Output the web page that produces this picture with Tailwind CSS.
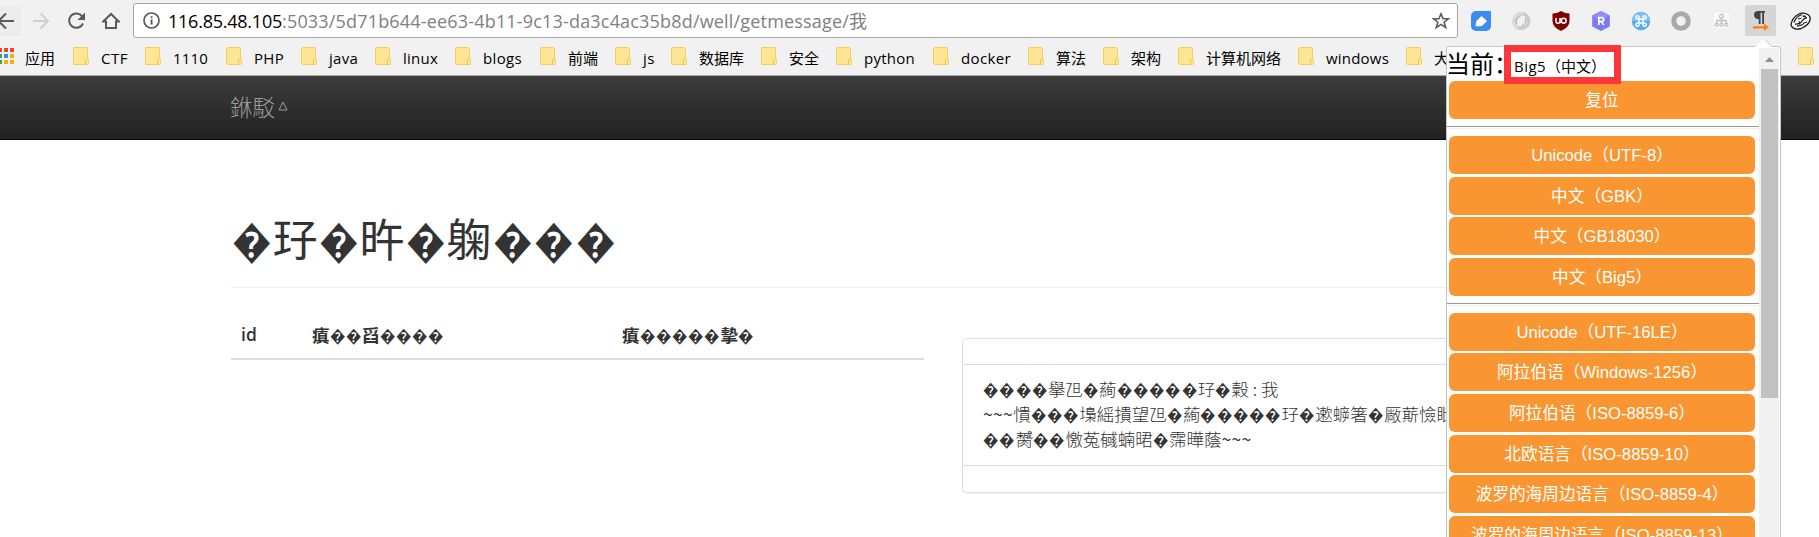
<!DOCTYPE html>
<html lang="zh-CN">
<head>
<meta charset="utf-8">
<title>well/getmessage</title>
<script src="https://cdn.jsdelivr.net/npm/@tailwindcss/browser@4"></script>
</head>
<body class="relative h-[537px] w-[1819px] overflow-hidden bg-white font-['Open_Sans','Noto_Sans_CJK_SC',sans-serif] text-[#333]">

<!-- browser toolbar -->
<div class="flex h-[39px] items-center bg-[#f1f1f1] pt-[2px]">
  <div class="flex h-[30px] w-[21px] items-center bg-[#ececec]">
    <svg class="h-5 w-[21px]" viewBox="0 0 21 20" fill="none" stroke="#5a5a5a" stroke-width="2"><path d="M14 10H-1M6 2.500L-1.500 10 6 17.500"/></svg>
  </div>
  <svg class="ml-[11px] h-5 w-[18px]" viewBox="0 0 18 20" fill="none" stroke="#cfcfcf" stroke-width="2"><path d="M1 10H16M8.500 2.500L16 10l-7.500 7.500"/></svg>
  <svg class="ml-[17px] h-[18px] w-[19px]" viewBox="0 0 19 18" fill="none" stroke="#5a5a5a" stroke-width="2"><path d="M15.300 4.500A7.200 7.200 0 1 0 16 11.500"/><path d="M18 0.500V8H10.500z" fill="#5a5a5a" stroke="none"/></svg>
  <svg class="ml-[16px] h-[18px] w-[18px]" viewBox="0 0 18 18" fill="none" stroke="#5a5a5a" stroke-width="2"><path d="M1.200 9.500L9 2l7.800 7.500H14V16H4V9.500z"/></svg>
  <div class="ml-[13px] flex h-[35px] w-[1325px] items-center rounded-[3px] border border-[#a6a6a6] bg-white pr-[7px] pl-[9px]">
    <svg class="size-[17px] shrink-0" viewBox="0 0 17 17"><circle cx="8.500" cy="8.500" r="7.500" fill="none" stroke="#5a5a5a" stroke-width="1.700"/><path d="M7.600 7.500h1.900V12.500h-1.900zM7.600 4.300h1.900v1.900h-1.900z" fill="#5a5a5a"/></svg>
    <div class="ml-[8px] text-[18px] leading-[30px] tracking-[-0.300px] whitespace-nowrap"><span data-w="114" class="text-black">116.85.48.105</span><span data-w="567" class="text-[#808080]">:5033/5d71b644-ee63-4b11-9c13-da3c4ac35b8d/well/getmessage/</span><span class="text-[18px] text-[#808080]">我</span></div>
    <svg class="ml-auto size-[18px] shrink-0" viewBox="0 0 18 18" fill="none" stroke="#5a5a5a" stroke-width="1.600"><path d="M9 1.800l2.100 5h5.200l-4.200 3.400 1.600 5.400L9 12.400l-4.700 3.200 1.600-5.400L1.700 6.800h5.200z"/></svg>
  </div>
  <!-- extension icons -->
  <div class="ml-[13px] flex items-center">
    <div class="w-[40px]"><svg class="size-[20px]" viewBox="0 0 20 20"><path d="M5 0H20V15a5 5 0 0 1-5 5H5a5 5 0 0 1-5-5V5a5 5 0 0 1 5-5z" fill="#3b8cf0"/><path d="M5 15l.8-5L10.500 5.500 15.500 10l-4.500 4.500z" fill="#fff" stroke="#fff" stroke-linejoin="round"/></svg></div>
    <div class="w-[40px]"><svg class="size-[20px]" viewBox="0 0 20 20" fill="none"><path d="M12.500 3A7.300 7.300 0 1 0 8.500 17.500" stroke="#dadada" stroke-width="4"/><path d="M7.500 16.600A7.300 7.300 0 1 0 12 2.800" stroke="#cbcbcb" stroke-width="3.500"/><path d="M6 13Q3.500 7.500 10 4.500M14.500 7Q16 13 10 15.500" stroke="#b2b2b2" stroke-width="1.200"/></svg></div>
    <div class="w-[40px]"><svg class="size-[20px]" viewBox="0 0 20 20"><path d="M10 0q4 2.500 8.500 2.500V10q0 6-8.500 10Q1.500 16 1.500 10V2.500Q6 2.500 10 0z" fill="#800000"/><path d="M5 7v3.300q0 2 2 2t2-2V7M9.200 7v5.200" fill="none" stroke="#fff" stroke-width="1.500"/><circle cx="12.700" cy="9.700" r="2.400" fill="none" stroke="#fff" stroke-width="1.500"/></svg></div>
    <div class="w-[40px]"><svg class="size-[20px]" viewBox="0 0 20 20"><path d="M10 0l8.800 4.500v11L10 20l-8.800-4.500v-11z" fill="#7a7af2"/><path d="M10 0l8.800 4.500L10 10 1.200 4.500z" fill="#8f8ff8"/><path d="M7.800 14V6.500h2.700q2.200 0 2.200 2.100t-2.200 2.100H8M10.300 10.700L13 14" fill="none" stroke="#fff" stroke-width="1.700"/></svg></div>
    <div class="w-[40px]"><svg class="size-[20px]" viewBox="0 0 20 20"><circle cx="10" cy="10" r="9.200" fill="#5aacec"/><path d="M1 10a9 9 0 0 1 18 0z" fill="#7cc2f5"/><path d="M8 8H12V12H8zM8 8H6.500A1.600 1.600 0 1 1 8 6.500zM12 8V6.500A1.600 1.600 0 1 1 13.500 8zM12 12h1.500A1.600 1.600 0 1 1 12 13.500zM8 12v1.500A1.600 1.600 0 1 1 6.500 12z" fill="none" stroke="#fff" stroke-width="1.400"/></svg></div>
    <div class="w-[43px]"><svg class="size-[20px]" viewBox="0 0 20 20"><circle cx="10" cy="10" r="7.300" fill="none" stroke="#a9a9a9" stroke-width="5"/></svg></div>
    <div class="w-[31px]"><svg class="size-[15px]" viewBox="0 0 15 15" fill="none" stroke="#c0c0c0" stroke-width="1.300"><rect width="15" height="15" rx="2" fill="#fafafa" stroke="none"/><circle cx="7.500" cy="3.200" r="1.900"/><path d="M7.500 5v5M2.800 10V7.500h9.400V10"/><circle cx="2.800" cy="11.700" r="1.500"/><circle cx="7.500" cy="11.700" r="1.500"/><circle cx="12.200" cy="11.700" r="1.500"/></svg></div>
    <div class="flex h-[31px] w-[31px] items-center justify-center rounded-[2px] bg-[#d5d5d5]"><svg class="h-[20px] w-[18px]" viewBox="0 0 18 20"><path d="M5.500 0H13V1.800H12V13H10.200V1.800H8.500V13H6.700V8A4 4 0 0 1 5.500 0z" fill="#37474f"/><path d="M1 15.200H12V12.400L17 16.200 12 20V17.400H1z" fill="#ff7d0a"/></svg></div>
    <svg class="ml-[14px] h-[18px] w-[21px]" viewBox="0 0 21 18" fill="none" stroke="#1f1f1f" stroke-width="1.300"><path d="M1 13Q2 6 8 2.500 12 0 17 2q4 2 3 6-1 5-9 8.500-8 2-10-3.500z" fill="#fff"/><path d="M4 10.500q2-6 8-8M5 12q5 .5 7-3 2-3 5-3.500M8 7l3.500-1M12.500 4l3.500.5M7 14q5 0 7-3l3-1M9 9.500l1 3"/></svg>
  </div>
</div>

<!-- bookmarks bar -->
<div id="bookmarks" class="flex h-[37px] items-center border-b border-[#a9aca9] bg-[#f1f1f1] pt-[2px] text-[15px] leading-[20px] whitespace-nowrap text-black">
  <svg class="mb-[5px] h-[17px] w-[15px] shrink-0" viewBox="0 0 15 17"><path d="M-2 1h4v4h-4zM4 1h4v4H4zM10 1h4v4h-4z" fill="#ea4335"/><path d="M-2 7h4v4h-4z" fill="#34a853"/><path d="M4 7h4v4H4z" fill="#2f8df5"/><path d="M10 7h4v4h-4zM4 13h4v4H4zM10 13h4v4h-4z" fill="#fbac08"/><path d="M-2 13h4v4h-4z" fill="#34a853"/></svg>
  <div class="ml-[10px] w-[48px] shrink-0"><span data-w="30">应用</span></div>
</div>

<!-- site navbar -->
<div class="flex h-[64px] items-center border-b border-[#080808] bg-linear-to-b from-[#3c3c3c] to-[#222] pb-[4px] pl-[230px] font-['Noto_Sans_CJK_TC',sans-serif] text-[22.500px] leading-[28px] font-light text-[#9d9d9d]">
  <span>&#x929D;駁</span><svg class="mt-[1px] ml-[3px] size-[10px]" viewBox="0 0 10 10" fill="none" stroke="#9d9d9d"><path d="M5 1L9 9H1z"/></svg>
</div>

<!-- page content -->
<main class="ml-[231px] w-[1462px] pt-[71px] font-['Noto_Sans_CJK_TC','Noto_Sans_CJK_SC',sans-serif]">
  <h1 class="mojibake flex h-[77px] items-center border-b border-[#eee] pb-[23px] text-[45px] leading-[50px] font-normal whitespace-nowrap">�㺭�旿�躹���</h1>
  <div class="flex items-start">
    <div class="mt-[24px] grid h-[48px] w-[693px] grid-cols-[71px_310px_1fr] items-center border-b-2 border-[#ddd] pb-[2px] pl-[10px] text-[17.500px] leading-[25px] font-bold">
      <div class="font-['Open_Sans'] font-semibold">id</div>
      <div class="mojibake">&#x7628;��舀����</div>
      <div class="mojibake">&#x7628;�����&#x6470;�</div>
    </div>
    <div class="mt-[50px] ml-[38px] h-[155px] w-[731px] rounded-[5px] border border-[#ddd] shadow-[0_1px_1px_rgba(0,0,0,0.05)]">
      <div class="h-[26px] border-b border-[#ddd]"></div>
      <div class="h-[101px] overflow-hidden border-b border-[#ddd] pt-[11px] pl-[20px] text-[17.500px] leading-[25px] font-light whitespace-nowrap">
        <div class="mojibake h-[25px]">����&#x64E7;&#x2313D;�&#x26ED6;�����㺭�&#x7CD3; : 我</div>
        <div class="mojibake h-[25px]">~~~&#x6192;���&#x213ED;&#x430A;&#x648C;望&#x2313D;�&#x26ED6;�����㺭�&#x906C;&#x8777;&#x7BB8;�&#x53B0;&#x452E;&#x61B8;&#x401D;</div>
        <div class="mojibake h-[25px]">��&#x81A5;��&#x61BF;&#x83DF;&#x224B0;&#x877B;&#x231C9;�&#x9708;&#x66C4;&#x852D;~~~</div>
      </div>
    </div>
  </div>
</main>

<!-- extension popup -->
<div class="absolute top-[46px] left-[1446px] h-[491px] w-[335px] rounded-t-[4px] border border-b-0 border-[#c6c6c6] bg-white text-black">
  <svg class="absolute -top-[9px] left-[308px] h-[10px] w-[18px]" viewBox="0 0 18 10"><path d="M0 9L9 0l9 9v1H0z" fill="#fff"/><path d="M9 .5L17 9" fill="none" stroke="#c6c6c6"/></svg>
  <div class="flex h-full overflow-hidden">
    <div class="w-[312px]">
      <div class="-ml-px flex h-[34px] items-center pb-[2px] text-[24px] leading-[34px] whitespace-nowrap"><span class="font-['Noto_Sans_CJK_SC']">当前：</span></div>
      <div class="px-[2px] font-['Liberation_Sans','Noto_Sans_CJK_SC',sans-serif] text-[16.670px] leading-[39px] whitespace-nowrap text-white">
        <div class="h-[38px] w-[306px] rounded-[6px] bg-[#f99632] text-center">复位</div>
      </div>
      <div class="mt-[7px] h-[3px] border-t border-b border-t-[#999] border-b-[#eee]"></div>
      <div class="mt-[7px] flex flex-col gap-[2.600px] px-[2px] font-['Liberation_Sans','Noto_Sans_CJK_SC',sans-serif] text-[16.670px] leading-[40px] whitespace-nowrap text-white">
        <div class="h-[38px] w-[306px] rounded-[6px] bg-[#f99632] text-center">Unicode（UTF-8）</div>
        <div class="h-[38px] w-[306px] rounded-[6px] bg-[#f99632] text-center">中文（GBK）</div>
        <div class="h-[38px] w-[306px] rounded-[6px] bg-[#f99632] text-center">中文（GB18030）</div>
        <div class="h-[38px] w-[306px] rounded-[6px] bg-[#f99632] text-center">中文（Big5）</div>
      </div>
      <div class="mt-[7px] h-[3px] border-t border-b border-t-[#999] border-b-[#eee]"></div>
      <div class="mt-[7px] flex flex-col gap-[2.600px] px-[2px] font-['Liberation_Sans','Noto_Sans_CJK_SC',sans-serif] text-[16.670px] leading-[40px] whitespace-nowrap text-white">
        <div class="h-[38px] w-[306px] rounded-[6px] bg-[#f99632] text-center">Unicode（UTF-16LE）</div>
        <div class="h-[38px] w-[306px] rounded-[6px] bg-[#f99632] text-center">阿拉伯语（Windows-1256）</div>
        <div class="h-[38px] w-[306px] rounded-[6px] bg-[#f99632] text-center">阿拉伯语（ISO-8859-6）</div>
        <div class="h-[38px] w-[306px] rounded-[6px] bg-[#f99632] text-center">北欧语言（ISO-8859-10）</div>
        <div class="h-[38px] w-[306px] rounded-[6px] bg-[#f99632] text-center">波罗的海周边语言（ISO-8859-4）</div>
        <div class="h-[38px] w-[306px] rounded-[6px] bg-[#f99632] text-center">波罗的海周边语言（ISO-8859-13）</div>
      </div>
    </div>
    <div class="mt-[1px] flex w-[20px] flex-col items-center bg-[#f1f1f1]">
      <svg class="mt-[9px] h-[5px] w-[9px] shrink-0" viewBox="0 0 9 5"><path d="M4.500 0L9 5H0z" fill="#8f8f8f"/></svg>
      <div class="mt-[7px] h-[329px] w-[17px] bg-[#c1c1c1]"></div>
    </div>
  </div>
  <!-- highlighted current encoding -->
  <div class="absolute -top-[2px] left-[57px] flex h-[39px] w-[117px] items-center border-[7px] border-[#fd3639] bg-white pt-[4px] pl-[3px] text-[15px] whitespace-nowrap"><span data-w="32">Big5</span><span data-w="60">（中文）</span></div>
</div>

<template id="folder">
  <div class="flex shrink-0 items-center gap-[12px]">
    <svg class="mb-[5px] h-[18px] w-[16px] shrink-0" viewBox="0 0 16 18"><path d="M1.500.5h12q1 0 1 1v10q1.300 0 1.300 1.500v3q0 1.500-1.500 1.500H1.500q-1 0-1-1v-15q0-1 1-1z" fill="#ffe694" stroke="#f3cf5a"/><path d="M12.500 16.500v-3q0-1.500 1.300-1.500" fill="none" stroke="#eebf3c"/></svg>
    <span></span>
  </div>
</template>

<script>
// [label, slot width, label width]
const marks = [['CTF',72,27],['1110',81,35],['PHP',75,30],['java',74,29],['linux',80,35],['blogs',85,39],['前端',75,30],['js',56,12],['数据库',90,45],['安全',75,30],['python',97,51],['docker',95,50],['算法',75,30],['架构',75,30],['计算机网络',120,75],['windows',108,63],['大',392,15],['',20,0]];
const bar = document.getElementById('bookmarks'), tpl = document.getElementById('folder');
for (const [label, slot, w] of marks) {
  const el = tpl.content.firstElementChild.cloneNode(true), t = el.querySelector('span');
  el.style.width = slot + 'px';
  t.textContent = label;
  if (w) t.dataset.w = w;
  bar.append(el);
}
// replacement characters sit in slightly narrower cells than the ideographs
for (const el of document.querySelectorAll('.mojibake'))
  el.innerHTML = el.textContent.replace(/\ufffd/g, '<span class="inline-flex w-[0.927em] justify-center"><span class="inline-block scale-x-[0.88] font-normal">\ufffd</span></span>').replace(/~~~/g, '<span data-w="30" class="font-normal">~~~</span>');
// spread each label over its intended width, once the stylesheet is in force
function fit() {
  if (getComputedStyle(bar).display !== 'flex') return;
  for (const el of document.querySelectorAll('[data-w]')) {
    const n = [...el.textContent].length;
    el.style.letterSpacing = '0px';
    const range = document.createRange();
    range.selectNodeContents(el);
    el.style.letterSpacing = (el.dataset.w - range.getBoundingClientRect().width) / n + 'px';
  }
}
fit();
addEventListener('load', fit);
new MutationObserver(fit).observe(document.head, { childList: true, subtree: true });
document.fonts.ready.then(fit);
for (const ms of [0, 50, 150, 300]) setTimeout(fit, ms);
requestAnimationFrame(fit);
</script>
</body>
</html>
